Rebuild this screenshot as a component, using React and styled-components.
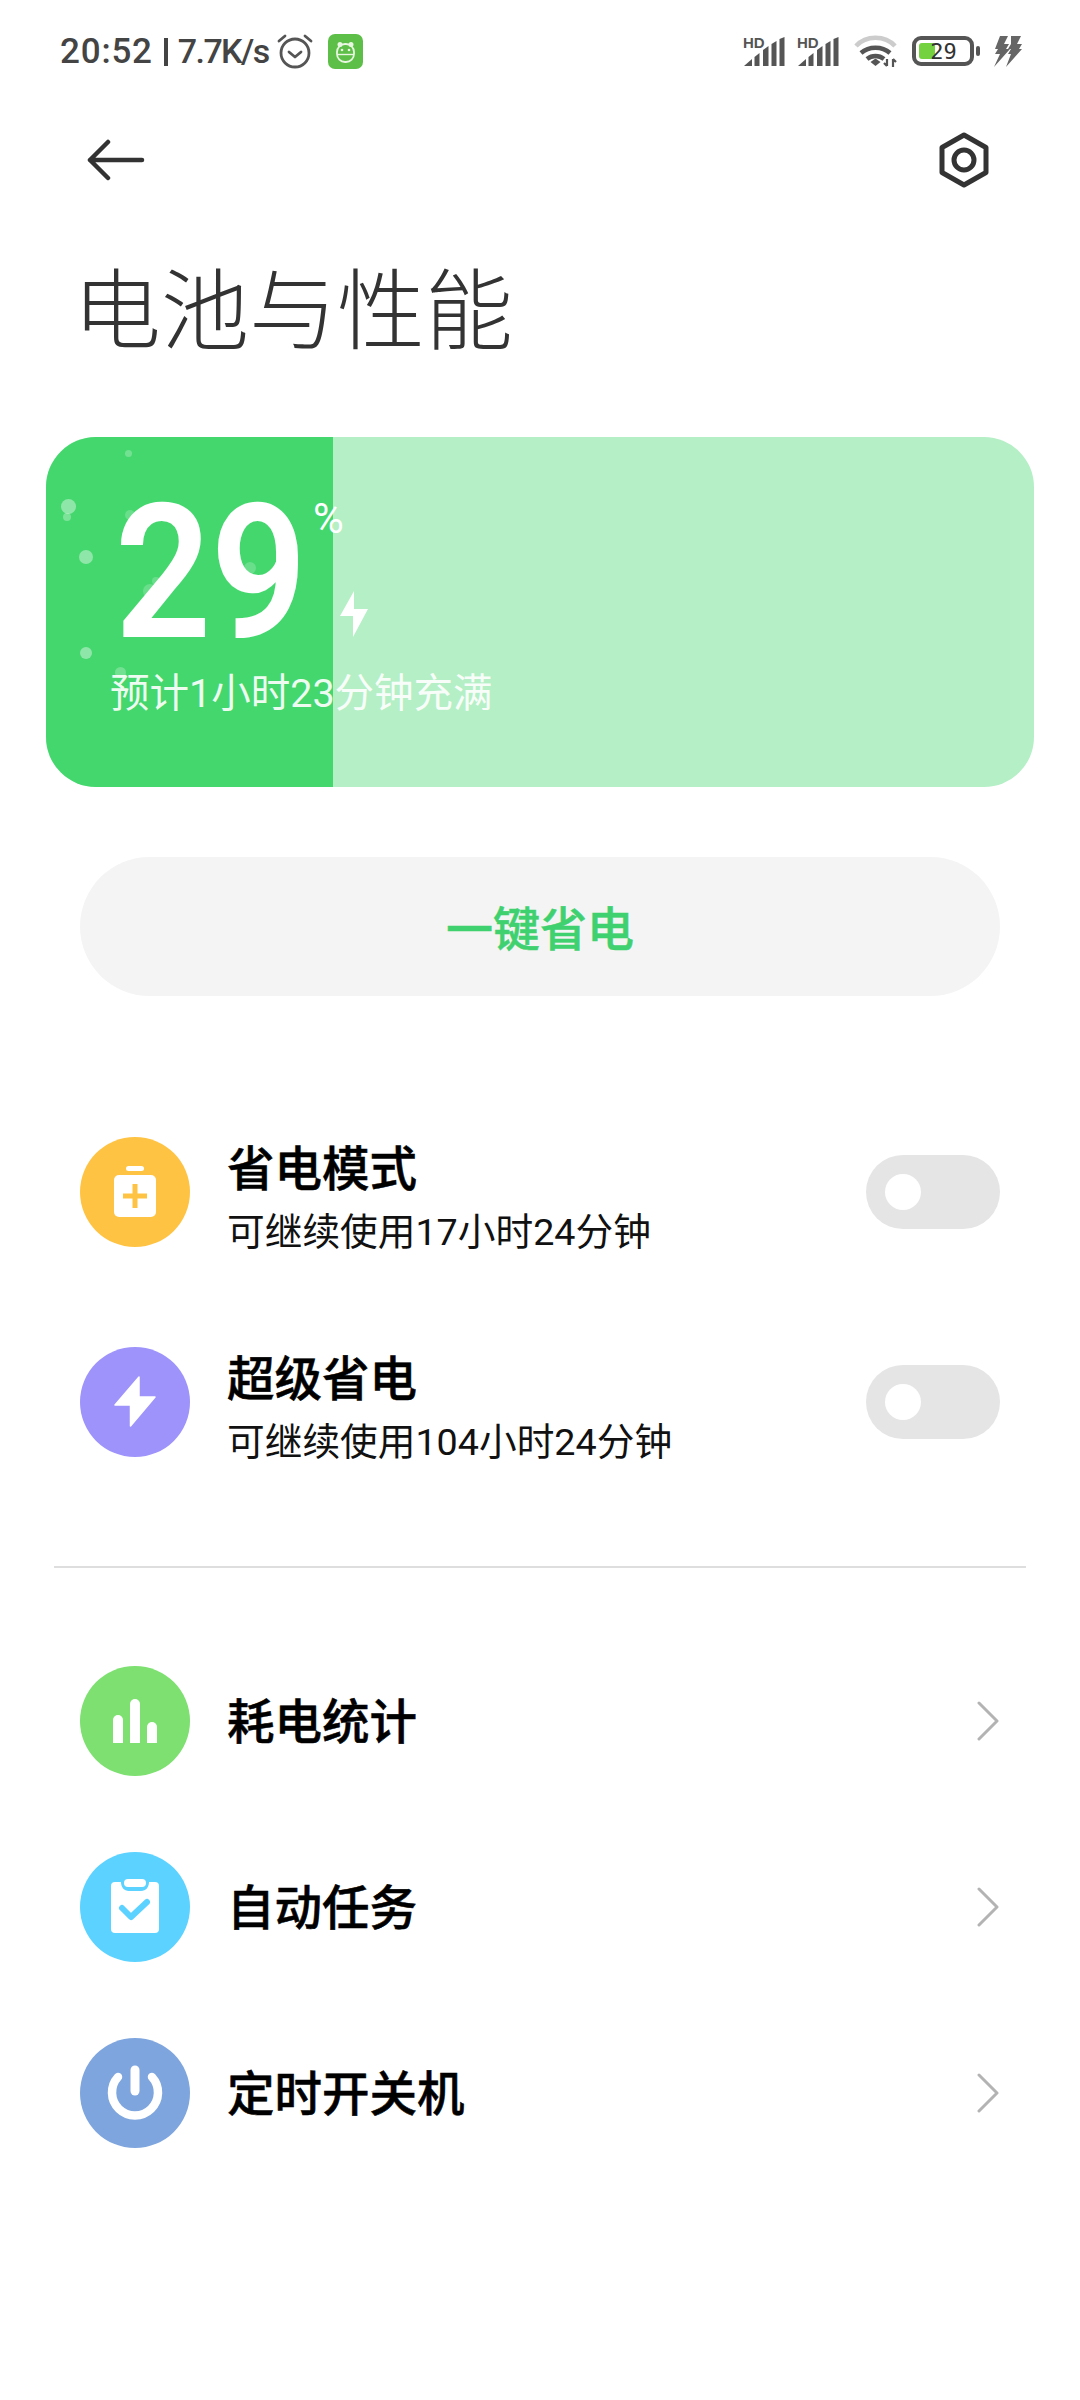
import styled, { createGlobalStyle } from 'styled-components';

const GlobalStyle = createGlobalStyle`
  html, body {
    margin: 0;
    padding: 0;
    background: #fff;
  }
  body {
    font-family: "Roboto", "Noto Sans CJK SC", sans-serif;
  }
`;

const Page = styled.div`
  width: 1080px;
  height: 2400px;
  background: #fff;
  overflow: hidden;
`;

const StatusBar = styled.div`
  display: flex;
  justify-content: space-between;
  align-items: center;
  height: 102px;
  padding: 0 58px 0 60px;
`;
const StatusLeft = styled.div`
  display: flex;
  align-items: center;
`;
const StatusTime = styled.span`
  font-size: 35px;
  font-weight: 500;
  color: #444;
  letter-spacing: 0.8px;
`;
const StatusBarSep = styled.span`
  width: 4px;
  height: 28px;
  margin: 2px 10px 0 11px;
  background: #444;
`;
const StatusSpeed = styled.span`
  font-size: 34px;
  font-weight: 500;
  color: #444;
  letter-spacing: -1.6px;
`;
const StatusSlot = styled.span`
  display: flex;
  margin-left: ${(p) => p.$left || 0}px;
`;
const StatusRight = styled.div`
  display: flex;
  align-items: center;
  gap: 12px;
`;
const SignalSvg = styled.svg`
  margin-top: -6px;
`;
const BatteryWrap = styled.div`
  display: flex;
  align-items: center;
  gap: 2px;
  margin: 0 1px 0 2px;
`;
const BatteryBody = styled.div`
  position: relative;
  box-sizing: border-box;
  width: 62px;
  height: 30px;
  border: 4px solid #555;
  border-radius: 9px;
  display: flex;
  align-items: center;
  justify-content: center;
`;
const BatteryFill = styled.div`
  position: absolute;
  left: 3px;
  top: 3px;
  width: 16px;
  height: 16px;
  background: #74d13f;
  border-radius: 3px;
`;
const BatteryText = styled.span`
  position: relative;
  font-family: "DejaVu Sans Mono", monospace;
  font-size: 22px;
  color: #333;
  margin-left: 1px;
`;
const BatteryNub = styled.div`
  width: 4px;
  height: 10px;
  background: #555;
  border-radius: 2px;
`;

const Toolbar = styled.div`
  display: flex;
  justify-content: space-between;
  align-items: center;
  height: 116px;
  padding: 0 90px 0 87px;
`;

const Title = styled.h1`
  margin: 26px 0 0 73px;
  font-size: 88px;
  line-height: 120px;
  font-weight: 300;
  color: #333;
  letter-spacing: 0;
  font-family: "Noto Sans CJK SC", sans-serif;
`;

const Card = styled.div`
  position: relative;
  box-sizing: border-box;
  width: 988px;
  height: 350px;
  margin: 73px 0 0 46px;
  border-radius: 50px;
  background: #b5efc6;
  overflow: hidden;
  padding: 52px 0 0 66px;
`;
const CardFill = styled.div`
  position: absolute;
  left: 0;
  top: 0;
  bottom: 0;
  background: #44d76e;
`;
const Bubble = styled.span`
  position: absolute;
  border-radius: 50%;
  background: rgba(255, 255, 255, ${(p) => p.$alpha});
`;
const CardContent = styled.div`
  position: relative;
`;
const LevelRow = styled.div`
  display: flex;
  height: 170px;
`;
const LevelNumber = styled.div`
  flex: none;
  width: 189px;
  padding-left: 3px;
  font-family: "Roboto", sans-serif;
  font-size: 188px;
  font-weight: 600;
  line-height: 168px;
  color: #fff;
  letter-spacing: -1px;
  transform: scaleX(0.9);
  transform-origin: left center;
`;
const LevelSide = styled.div`
  display: flex;
  flex-direction: column;
  justify-content: space-between;
  padding: 7px 0 22px 9px;
  align-items: flex-start;
`;
const Percent = styled.span`
  font-family: "Roboto", sans-serif;
  font-size: 42px;
  line-height: 46px;
  color: #fff;
`;
const BoltSvg = styled.svg`
  margin-left: 26px;
`;
const Estimate = styled.div`
  margin: 10px 0 0 -2px;
  font-size: 39.5px;
  line-height: 50px;
  color: rgba(255, 255, 255, 0.92);
`;

const SaveButton = styled.div`
  display: flex;
  align-items: center;
  justify-content: center;
  box-sizing: border-box;
  width: 920px;
  height: 139px;
  margin: 70px 0 0 80px;
  padding-bottom: 3px;
  border-radius: 70px;
  background: #f4f4f4;
  color: #3fd16f;
  font-size: 47px;
  font-weight: 500;
  -webkit-text-stroke: 0.5px #3fd16f;
`;

const RowList = styled.div`
  display: flex;
  flex-direction: column;
  gap: ${(p) => p.$gap}px;
  padding: 0 80px;
  margin-top: ${(p) => p.$top}px;
`;
const Row = styled.div`
  display: flex;
  align-items: center;
  height: 110px;
`;
const IconCircle = styled.div`
  flex: none;
  width: 110px;
  height: 110px;
  border-radius: 50%;
  background: ${(p) => p.$color};
  margin-right: 37px;
`;
const RowText = styled.div`
  flex: 1;
  display: flex;
  flex-direction: column;
  gap: 6px;
  padding-top: ${(p) => p.$top}px;
`;
const RowTitle = styled.div`
  font-size: 47.5px;
  line-height: 62px;
  font-weight: 500;
  color: #000;
  -webkit-text-stroke: 0.5px #000;
`;
const RowSub = styled.div`
  font-size: 37.7px;
  line-height: 50px;
  color: #111;
`;
const Toggle = styled.div`
  flex: none;
  display: flex;
  align-items: center;
  box-sizing: border-box;
  width: 134px;
  height: 74px;
  border-radius: 37px;
  background: #e5e5e5;
  padding-left: 19px;
`;
const Knob = styled.div`
  width: 36px;
  height: 36px;
  border-radius: 50%;
  background: #fff;
`;
const Divider = styled.div`
  height: 2px;
  width: 972px;
  margin: 109px 0 0 54px;
  background: #dedede;
`;

const bubbles = [
  { x: 22, y: 69, r: 7.5, a: 0.4 },
  { x: 21, y: 80, r: 4, a: 0.3 },
  { x: 82, y: 16, r: 3.5, a: 0.25 },
  { x: 40, y: 120, r: 7, a: 0.4 },
  { x: 40, y: 216, r: 6, a: 0.4 },
  { x: 74, y: 235, r: 5.5, a: 0.25 },
  { x: 84, y: 78, r: 5, a: 0.2 },
  { x: 104, y: 154, r: 7, a: 0.2 },
  { x: 204, y: 131, r: 6, a: 0.2 },
  { x: 110, y: 144, r: 4, a: 0.2 },
];

const BackIcon = () => (
  <svg width="58" height="42" viewBox="0 0 58 42" fill="none" stroke="#333" strokeWidth="4.5" strokeLinecap="round" strokeLinejoin="round">
    <path d="M55 21H3M21 3L3 21l18 18" />
  </svg>
);

const SettingsIcon = () => (
  <svg width="52" height="56" viewBox="0 0 52 56" fill="none" stroke="#333" strokeWidth="5" strokeLinejoin="round">
    <path d="M26 3l22 12.5v25L26 53 4 40.5v-25z" />
    <circle cx="26" cy="28" r="10" />
  </svg>
);

const AlarmIcon = () => (
  <svg width="36" height="36" viewBox="0 0 36 36" fill="none" stroke="#555" strokeWidth="2.8" strokeLinecap="round" strokeLinejoin="round">
    <circle cx="18" cy="20" r="14" />
    <path d="M12 19l6 5 6-5M2 8l6-5M34 8l-6-5" />
  </svg>
);

const AppBadge = () => (
  <svg width="35" height="35" viewBox="0 0 35 35">
    <rect width="35" height="35" rx="7" fill="#5dbf47" />
    <circle cx="12" cy="10.5" r="2.5" fill="#e8f6e2" />
    <circle cx="23" cy="10.5" r="2.5" fill="#e8f6e2" />
    <rect x="9" y="10" width="17" height="18" rx="8" fill="none" stroke="#e8f6e2" strokeWidth="1.8" />
    <circle cx="14" cy="16" r="1.3" fill="#e8f6e2" />
    <circle cx="21" cy="16" r="1.3" fill="#e8f6e2" />
    <path d="M9.5 20.5h16" stroke="#e8f6e2" strokeWidth="1.4" />
  </svg>
);

const SignalIcon = () => (
  <SignalSvg width="42" height="37" viewBox="0 -6 42 37">
    <text x="0" y="11.5" fontFamily="Liberation Sans, sans-serif" fontWeight="700" fontSize="15" fill="#555">HD</text>
    <g fill="#555">
      <path d="M1 30l8-7v7z" />
      <path d="M11.5 21l5-4v13h-5z" />
      <path d="M20 14l5.5-4v20H20z" />
      <path d="M28.5 8l5-3v25h-5z" />
      <path d="M36.5 3l5-2v29h-5z" />
    </g>
  </SignalSvg>
);

const WifiIcon = () => (
  <svg width="44" height="32" viewBox="0 0 44 32" fill="none">
    <path d="M2 11C12 0 31 0 41 11" stroke="#ccc" strokeWidth="4.5" />
    <path d="M7 18c8-7 21-7 29 0" stroke="#555" strokeWidth="4.5" />
    <path d="M13 24c5-4 12-4 17 0" stroke="#555" strokeWidth="4.5" />
    <path d="M16.5 27l5-3.5 5 3.5-5 4z" fill="#555" />
    <path d="M33 24v7M33 31l-3-3M39 32v-8M39 24l3 3" stroke="#555" strokeWidth="2.2" />
  </svg>
);

const ChargeIcon = () => (
  <svg width="29" height="31" viewBox="0 0 29 31" fill="#666">
    <path d="M7 0h8l-4 8h5l-3 5h4L1 31l6-13H2l3-5H2z" />
    <path d="M18 0h10l-4 8h5l-3 5h3L13 31l5-13h-3l3-5h-3l3-5z" />
  </svg>
);

const CardBolt = () => (
  <BoltSvg width="30" height="46" viewBox="0 0 30 46" fill="#fff">
    <path d="M15 0L1 25h13v21L29 18H15z" />
  </BoltSvg>
);

const SaverIcon = () => (
  <svg width="110" height="110" viewBox="0 0 110 110">
    <rect x="46" y="29" width="18" height="5" rx="2.5" fill="#fff" />
    <rect x="34" y="38" width="42" height="42" rx="5" fill="#fff" />
    <path d="M43 59h24M55 47v24" stroke="#ffc343" strokeWidth="5" />
  </svg>
);

const BoltIcon = () => (
  <svg width="110" height="110" viewBox="0 0 110 110">
    <path d="M59 30L35 58h15.5v21L75 50H59z" fill="#fff" stroke="#fff" strokeWidth="1.5" strokeLinejoin="round" />
  </svg>
);

const BarsIcon = () => (
  <svg width="110" height="110" viewBox="0 0 110 110" fill="#fff">
    <path d="M33 77V54a5 5 0 0 1 10 0v23z" />
    <path d="M50 77V38a5 5 0 0 1 10 0v39z" />
    <path d="M67 77V61a5 5 0 0 1 10 0v16z" />
  </svg>
);

const ClipboardIcon = () => (
  <svg width="110" height="110" viewBox="0 0 110 110">
    <path d="M35 30h6c0 5 3 9 8 9h12c5 0 8-4 8-9h6a4 4 0 0 1 4 4v43a4 4 0 0 1-4 4H35a4 4 0 0 1-4-4V34a4 4 0 0 1 4-4z" fill="#fff" />
    <rect x="44" y="27" width="22" height="8" rx="4" fill="#fff" />
    <path d="M42 56l9 9 16-15" fill="none" stroke="#5bd2ff" strokeWidth="6" strokeLinecap="round" strokeLinejoin="round" />
  </svg>
);

const PowerIcon = () => (
  <svg width="110" height="110" viewBox="0 0 110 110" fill="none" stroke="#fff">
    <path d="M38 39a23 23 0 1 0 34 0" strokeWidth="8.5" strokeLinecap="round" />
    <path d="M55 32v21" strokeWidth="9" strokeLinecap="round" />
  </svg>
);

const Chevron = () => (
  <svg width="24" height="40" viewBox="0 0 24 40" fill="none" stroke="#b3b3b3" strokeWidth="3" strokeLinecap="round" strokeLinejoin="round">
    <path d="M3 2l18 18L3 38" />
  </svg>
);

const modes = [
  { title: '省电模式', sub: '可继续使用17小时24分钟', color: '#ffc343', Icon: SaverIcon },
  { title: '超级省电', sub: '可继续使用104小时24分钟', color: '#9d93fb', Icon: BoltIcon },
];

const tools = [
  { title: '耗电统计', color: '#7de070', Icon: BarsIcon },
  { title: '自动任务', color: '#5bd2ff', Icon: ClipboardIcon },
  { title: '定时开关机', color: '#7ea5de', Icon: PowerIcon },
];

const level = 29;

const App = () => {
  return (
    <Page>
      <GlobalStyle />
      <StatusBar>
        <StatusLeft>
          <StatusTime>20:52</StatusTime>
          <StatusBarSep />
          <StatusSpeed>7.7K/s</StatusSpeed>
          <StatusSlot $left={8}><AlarmIcon /></StatusSlot>
          <StatusSlot $left={15}><AppBadge /></StatusSlot>
        </StatusLeft>
        <StatusRight>
          <SignalIcon />
          <SignalIcon />
          <StatusSlot $left={3}><WifiIcon /></StatusSlot>
          <BatteryWrap>
            <BatteryBody>
              <BatteryFill />
              <BatteryText>29</BatteryText>
            </BatteryBody>
            <BatteryNub />
          </BatteryWrap>
          <ChargeIcon />
        </StatusRight>
      </StatusBar>

      <Toolbar>
        <BackIcon />
        <SettingsIcon />
      </Toolbar>

      <Title>电池与性能</Title>

      <Card>
        <CardFill style={{ width: `${level}%` }} />
        {bubbles.map((b, i) => (
          <Bubble
            key={i}
            $alpha={b.a}
            style={{ left: b.x - b.r, top: b.y - b.r, width: b.r * 2, height: b.r * 2 }}
          />
        ))}
        <CardContent>
          <LevelRow>
            <LevelNumber>{level}</LevelNumber>
            <LevelSide>
              <Percent>%</Percent>
              <CardBolt />
            </LevelSide>
          </LevelRow>
          <Estimate>预计1小时23分钟充满</Estimate>
        </CardContent>
      </Card>

      <SaveButton>一键省电</SaveButton>

      <RowList $gap={100} $top={141}>
        {modes.map(({ title, sub, color, Icon }) => (
          <Row key={title}>
            <IconCircle $color={color}><Icon /></IconCircle>
            <RowText $top={12}>
              <RowTitle>{title}</RowTitle>
              <RowSub>{sub}</RowSub>
            </RowText>
            <Toggle><Knob /></Toggle>
          </Row>
        ))}
      </RowList>

      <Divider />

      <RowList $gap={76} $top={98}>
        {tools.map(({ title, color, Icon }) => (
          <Row key={title}>
            <IconCircle $color={color}><Icon /></IconCircle>
            <RowText $top={3}>
              <RowTitle>{title}</RowTitle>
            </RowText>
            <Chevron />
          </Row>
        ))}
      </RowList>
    </Page>
  );
};

export default App;
